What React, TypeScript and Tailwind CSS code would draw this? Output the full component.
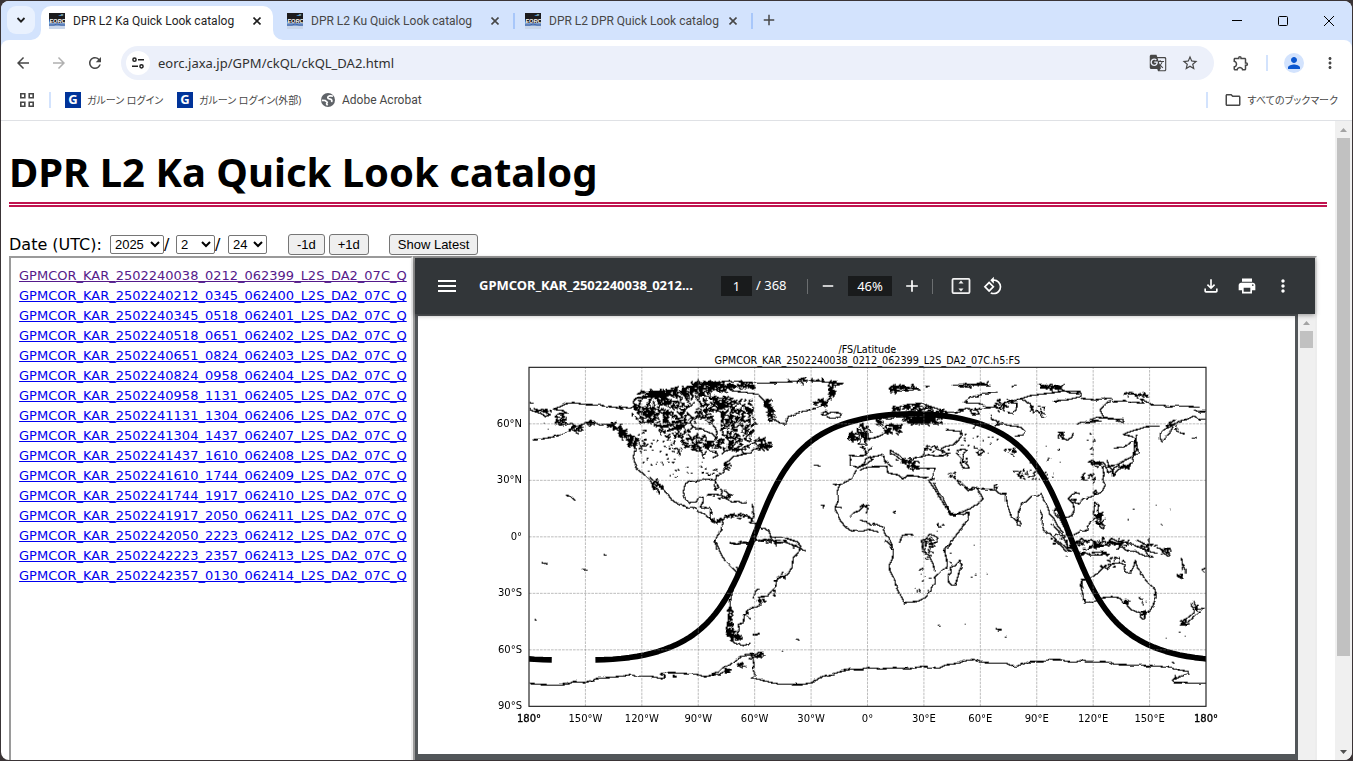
import type { ReactNode } from "react";
import {
  MdAdd,
  MdArrowBack,
  MdArrowForward,
  MdGTranslate,
  MdMenu,
  MdMoreVert,
  MdOutlineExtension,
  MdOutlineFileDownload,
  MdOutlineFolder,
  MdPerson,
  MdPrint,
  MdRefresh,
  MdRemove,
  MdRotate90DegreesCcw,
  MdStarBorder,
} from "react-icons/md";

const TABS = [
  "DPR L2 Ka Quick Look catalog",
  "DPR L2 Ku Quick Look catalog",
  "DPR L2 DPR Quick Look catalog",
];

const GRANULES = [
  "2502240038_0212_062399",
  "2502240212_0345_062400",
  "2502240345_0518_062401",
  "2502240518_0651_062402",
  "2502240651_0824_062403",
  "2502240824_0958_062404",
  "2502240958_1131_062405",
  "2502241131_1304_062406",
  "2502241304_1437_062407",
  "2502241437_1610_062408",
  "2502241610_1744_062409",
  "2502241744_1917_062410",
  "2502241917_2050_062411",
  "2502242050_2223_062412",
  "2502242223_2357_062413",
  "2502242357_0130_062414",
];

function Favicon() {
  return (
    <svg viewBox="0 0 16 16" className="size-4 shrink-0" aria-hidden="true">
      <rect width="16" height="16" fill="#1c1b1d" />
      <rect y="10" width="16" height="6" fill="#7f9fce" />
      <rect y="13" width="16" height="3" fill="#c9d6ea" />
      <path d="M0 12h5l3-1 4 1h4" stroke="#3f63a6" fill="none" />
      <path d="M9 3l4-2 2 1-3 1z" fill="#3c8ee8" />
      <path d="M12 2h2" stroke="#d9c84a" strokeWidth=".8" />
      <text
        x="0.3"
        y="9.8"
        fontSize="5.6"
        fontWeight="700"
        fontStyle="italic"
        fontFamily="Liberation Sans, sans-serif"
        fill="#fff"
      >
        EORC
      </text>
    </svg>
  );
}

function CloseIcon() {
  return (
    <svg viewBox="0 0 8 8" className="size-2" fill="none" stroke="currentColor" strokeWidth="1.6">
      <path d="M.5.5l7 7M7.5.5l-7 7" />
    </svg>
  );
}

function Tab({ title, active }: { title: string; active?: boolean }) {
  return (
    <div
      className={
        active
          ? "relative mr-1 flex h-[34px] w-[232px] items-center rounded-t-[10px] bg-white pb-1 pl-2 text-[#1f1f1f]"
          : "flex h-[34px] w-[238px] items-center pb-1 pl-[10px] text-[#474747]"
      }
    >
      {active && (
        <>
          <svg viewBox="0 0 10 10" className="absolute bottom-0 -left-[10px] size-[10px]" fill="#fff">
            <path d="M10 0v10H0A10 10 0 0 0 10 0z" />
          </svg>
          <svg viewBox="0 0 10 10" className="absolute -right-[10px] bottom-0 size-[10px]" fill="#fff">
            <path d="M0 0v10h10A10 10 0 0 1 0 0z" />
          </svg>
        </>
      )}
      <Favicon />
      <span className="ml-2 w-[176px] overflow-hidden text-[12px] whitespace-nowrap">{title}</span>
      <button type="button" aria-label={`Close ${title}`} className="flex size-4 items-center justify-center">
        <CloseIcon />
      </button>
      {!active && <span className="ml-[10px] h-4 w-[2px] bg-[#a8c7fa]" />}
    </div>
  );
}

function TabStrip() {
  return (
    <div className="flex h-[39px] shrink-0 items-end bg-[#d3e3fd] [font-family:Roboto,sans-serif]">
      <button
        type="button"
        aria-label="Search tabs"
        className="mr-[6px] mb-[6px] ml-[6px] flex size-7 items-center justify-center rounded-[9px] bg-[#e9f1fe]"
      >
        <svg viewBox="0 0 10 10" className="size-[10px]" fill="none" stroke="#1f1f1f" strokeWidth="1.8">
          <path d="M1.5 3l3.5 3.6L8.500 3" />
        </svg>
      </button>
      {TABS.map((title, index) => (
        <Tab key={title} title={title} active={index === 0} />
      ))}
      <button type="button" aria-label="New tab" className="mb-[11px] ml-[7px] text-[#474747]">
        <MdAdd className="size-[18px]" />
      </button>
      <div className="ml-auto flex h-full items-center text-black">
        <button type="button" aria-label="Minimize" className="flex w-[46px] justify-center">
          <svg viewBox="0 0 10 10" className="size-[10px]" stroke="currentColor">
            <path d="M0 4.500h10" />
          </svg>
        </button>
        <button type="button" aria-label="Maximize" className="flex w-[46px] justify-center">
          <svg viewBox="0 0 10 10" className="size-[10px]" fill="none" stroke="currentColor">
            <rect x=".5" y=".5" width="9" height="9" rx="1" />
          </svg>
        </button>
        <button type="button" aria-label="Close window" className="flex w-[46px] justify-center">
          <svg viewBox="0 0 10 10" className="size-[10px]" stroke="currentColor">
            <path d="M0 0l10 10M10 0L0 10" />
          </svg>
        </button>
      </div>
    </div>
  );
}

function Toolbar() {
  return (
    <div className="bg-[#d3e3fd]">
      <div className="flex h-[46px] items-center rounded-t-lg bg-white pl-[13px] text-[#474747]">
        <button type="button" aria-label="Back" className="mr-[18px]">
          <MdArrowBack className="size-[18px]" />
        </button>
        <button type="button" aria-label="Forward" className="mr-[18px] text-[#b0b0b0]">
          <MdArrowForward className="size-[18px]" />
        </button>
        <button type="button" aria-label="Reload">
          <MdRefresh className="size-[18px]" />
        </button>
        <div className="ml-[17px] flex h-[34px] grow items-center rounded-full bg-[#ecf0fa] px-[5px]">
          <button
            type="button"
            aria-label="Site information"
            className="flex size-6 items-center justify-center rounded-full bg-white"
          >
            <svg viewBox="0 0 14 14" className="size-[14px]" fill="none" stroke="#1f1f1f" strokeWidth="1.5">
              <circle cx="3.500" cy="3.700" r="1.600" />
              <path d="M7 3.700h6M1 10.300h6" />
              <circle cx="10.500" cy="10.300" r="1.600" />
            </svg>
          </button>
          <label className="ml-2 flex grow text-[13px]">
            <span className="hidden">Address</span>
            <input
              type="text"
              aria-label="Address"
              defaultValue="eorc.jaxa.jp/GPM/ckQL/ckQL_DA2.html"
              className="h-6 w-full grow bg-transparent text-[#303030] outline-none"
            />
          </label>
          <button type="button" aria-label="Translate this page" className="mr-[14px]">
            <MdGTranslate className="size-[18px]" />
          </button>
          <button type="button" aria-label="Bookmark this tab" className="mr-[10px]">
            <MdStarBorder className="size-[18px]" />
          </button>
        </div>
        <button type="button" aria-label="Extensions" className="ml-[18px]">
          <MdOutlineExtension className="size-[18px]" />
        </button>
        <span className="mx-4 h-4 w-[2px] bg-[#d3e3fd]" />
        <button
          type="button"
          aria-label="Profile"
          className="flex size-5 items-center justify-center rounded-full bg-[#d3e3fd] text-[#0b57d0]"
        >
          <MdPerson className="size-[18px]" />
        </button>
        <button type="button" aria-label="Menu" className="mr-[13px] ml-[17px]">
          <MdMoreVert className="size-[18px]" />
        </button>
      </div>
    </div>
  );
}

function Bookmark({ icon, className, children }: { icon: ReactNode; className?: string; children: ReactNode }) {
  return (
    <a href="#" className={`flex items-center gap-[6px] whitespace-nowrap ${className ?? ""}`}>
      {icon}
      {children}
    </a>
  );
}

function GaroonIcon() {
  return (
    <span className="flex size-4 items-center justify-center bg-[#003399] text-[13px] font-bold text-white">G</span>
  );
}

function GlobeIcon() {
  return (
    <svg viewBox="0 0 16 16" className="size-4" aria-hidden="true">
      <circle cx="8" cy="8" r="7" fill="#5f6368" />
      <path d="M13 4.200c-2-.8-4.800-.4-5.200 1-.3 1.300 1 1.600 2.400 1.900 1.600.4 2.200 1.700 1.200 3" fill="none" stroke="#fff" strokeWidth="1.7" />
      <path d="M1.800 8.300l3.400.2 2 1.700-.6 1.700 1 1.500" fill="none" stroke="#fff" strokeWidth="1.7" />
    </svg>
  );
}

function BookmarksBar() {
  return (
    <nav className="flex h-[35px] shrink-0 items-center border-b border-[#dfe1e5] bg-white pb-[6px] pl-[19px] text-[12px] text-[#474747]">
      <button type="button" aria-label="Apps">
        <svg viewBox="0 0 14 14" className="size-[14px]" fill="none" stroke="currentColor" strokeWidth="1.6">
          <path d="M.8.8h4v4h-4zM9.200.8h4v4h-4zM.8 9.200h4v4h-4zM9.200 9.200h4v4h-4z" />
        </svg>
      </button>
      <span className="mr-[14px] ml-[15px] h-4 w-[2px] bg-[#d3e3fd]" />
      <Bookmark className="w-28 text-[10px] [font-feature-settings:'palt']" icon={<GaroonIcon />}>
        ガルーン ログイン
      </Bookmark>
      <Bookmark className="w-[143px] text-[10px] [font-feature-settings:'palt']" icon={<GaroonIcon />}>
        ガルーン ログイン(外部)
      </Bookmark>
      <Bookmark className="[font-family:Roboto,sans-serif]" icon={<GlobeIcon />}>
        Adobe Acrobat
      </Bookmark>
      <span className="mr-4 ml-auto h-4 w-[2px] bg-[#d3e3fd]" />
      <Bookmark
        className="mr-[14px] text-[10px] [font-feature-settings:'palt']"
        icon={<MdOutlineFolder className="size-[18px]" />}
      >
        すべてのブックマーク
      </Bookmark>
    </nav>
  );
}

function Triangle({ down }: { down?: boolean }) {
  return (
    <svg viewBox="0 0 17 17" className="size-[17px]" fill={down ? "#505050" : "#a3a3a3"}>
      <path d={down ? "M5 7h7l-3.500 4z" : "M5 11h7l-3.500-4z"} />
    </svg>
  );
}

function DateForm() {
  const selectClass = "h-[19px] appearance-auto rounded-[2px] border border-[#767676] bg-white text-black";
  const buttonClass = "h-[21px] rounded-[3px] border border-[#767676] bg-[#efefef] px-2 text-black";

  return (
    <form className="flex items-center text-[13px] [font-family:'Liberation_Sans',Arial,sans-serif]">
      <span className="mr-2 text-[16px] leading-5 [font-family:'DejaVu_Sans',Verdana,sans-serif]">Date (UTC):</span>
      <select aria-label="Year" className={`${selectClass} w-[54px]`}>
        <option>2025</option>
      </select>
      <span className="w-[12px] text-[16px] leading-5 [font-family:'DejaVu_Sans',Verdana,sans-serif]">/</span>
      <select aria-label="Month" className={`${selectClass} w-[39px]`}>
        <option>2</option>
      </select>
      <span className="w-[13px] text-[16px] leading-5 [font-family:'DejaVu_Sans',Verdana,sans-serif]">/</span>
      <select aria-label="Day" className={`${selectClass} w-[39px]`}>
        <option>24</option>
      </select>
      <button type="button" className={`${buttonClass} ml-[21px]`}>
        -1d
      </button>
      <button type="button" className={`${buttonClass} ml-1`}>
        +1d
      </button>
      <button type="button" className={`${buttonClass} ml-5`}>
        Show Latest
      </button>
    </form>
  );
}

function GranuleList() {
  return (
    <div className="w-[404px] shrink-0 overflow-hidden border-2 border-t-[#9a9a9a] border-r-[#ededed] border-b-[#ededed] border-l-[#9a9a9a] bg-white">
      <ul className="px-2 pt-2 text-[13px] leading-5 whitespace-nowrap [font-family:'DejaVu_Sans',Verdana,sans-serif]">
        {GRANULES.map((id, index) => (
          <li key={id}>
            <a
              href="#"
              className={
                index === 0
                  ? "text-[#551a8b] underline [text-decoration-skip-ink:none]"
                  : "text-[#0000ee] underline [text-decoration-skip-ink:none]"
              }
            >
              GPMCOR_KAR_{id}_L2S_DA2_07C_Q
            </a>
          </li>
        ))}
      </ul>
    </div>
  );
}

// Figure units: three per CSS pixel at the default zoom.
const PLOT = { left: 333, top: 154, width: 2031, height: 1017 };
const toX = (lon: number) => PLOT.left + ((lon + 180) / 360) * PLOT.width;
const toY = (lat: number) => PLOT.top + ((90 - lat) / 180) * PLOT.height;

const LON_LABELS = ["180°", "150°W", "120°W", "90°W", "60°W", "30°W", "0°", "30°E", "60°E", "90°E", "120°E", "150°E", "180°"];
const LAT_LABELS = ["60°N", "30°N", "0°", "30°S", "60°S", "90°S"];

// One revolution: 65.3 degree inclination, the node drifts 23.2 degrees west per orbit.
// The track is drawn twice, a full turn apart, and the plot's clip keeps the visible part.
function orbitPath(turnOffset: number) {
  const rad = Math.PI / 180;
  const incl = 65.3 * rad;
  let d = "";
  for (let u = -90; u <= 270; u += 2) {
    const lat = Math.asin(Math.sin(incl) * Math.sin(u * rad)) / rad;
    let turn = Math.atan2(Math.cos(incl) * Math.sin(u * rad), Math.cos(u * rad)) / rad;
    if (u > 90 && turn < 0) turn += 360;
    const lon = -60.5 + turn - (u / 360) * 23.2 + turnOffset;
    d += `${d === "" ? "M" : "L"}${toX(lon).toFixed(1)} ${toY(lat).toFixed(1)}`;
  }
  return d;
}

// Lakes and small islands: [cx, cy, rx, ry, count, size]
type Cluster = [number, number, number, number, number, number];

function speckle(clusters: Cluster[]) {
  let seed = 7;
  const rnd = () => {
    seed = (seed * 16807) % 2147483647;
    return seed / 2147483647;
  };
  let d = "";
  for (const [cx, cy, rx, ry, count, size] of clusters) {
    for (let i = 0; i < count; i++) {
      const a = rnd() * Math.PI * 2;
      const r = Math.sqrt(rnd());
      const x = cx + Math.cos(a) * r * rx;
      const y = cy + Math.sin(a) * r * ry;
      const step = () => ((rnd() - 0.5) * size * 1.4).toFixed(0);
      d += `M${x.toFixed(0)} ${y.toFixed(0)}l${(rnd() * size * 0.7 + 2).toFixed(0)} ${step()}l${step()} ${step()}`;
    }
  }
  return d;
}

const NW_COAST = [
  "M28 128l14 2M28 148l17 7 15 5 20 10 10-6-15-8-20-5-15-6M70 188l3 2M83 208l2 1",
  "M102 148l13-6 25-11 20-3 30 5 50 3 45 6 25 6-12-8 35 5 12-8-6-12 15-12 20 4 14-12",
  "M102 148l28 4 10 8-30 2-2 8 22 2-12 8-10 5 22 5-2 8 22-8 20 10-20 10-30 15-30 8-30 5-22 2",
  "M170 200l30-12 20-3 20 10 25-3 15 8 20 15 20 20 25 20v15l-5 20 5 20 10 20 20 15 15 15 15 25 15 15",
  "M390 352l20 18 20 15 15 20 10 15 20 12 25 8 20 3 15 12 20 7 15 16 20 9 15-7 5 10-7 10 2 10-15 20-4 15 4 25",
  "M585 360l-25-2-25 4-25 3-15 10-5 20 5 20 15 13 20-3 5-13 15-2-2 20-8 10 30 5 5 15-3 15 18 12",
  "M585 360l-2 15 7 15 5-10-10-18 5-12 20-10 5-15-3-15 18-10 10-10 25-6 25-6 10-10 30-6 12 2 2 6-10-6-8-14-6-8-12 2-16 10-24 8-20 14",
  "M510 185l8 15 12 5 20 2 15 10 15 5 5 18 6-20-2-12-14-18 5-12-10-8-20 4-22-4z",
  "M635 92l45 6 35 5 20 22 10 25 10 25 20 13 22 4 8-22 25-10 35-10 25-5 25-10 5-15 20-20-5-20 35-10-50-4-60-6-60 6-80 4-30-2-60-6-40 6-50 10-40 6",
  "M905 160l12-6 8 8-12 4zM918 165l14-8 24 1 10 6-8 8-24 3-14-5",
  "M560 405l25-3 25 6 12 10 14 8 20-2 12 6 10-2M590 378l8 4M600 385l6 10M612 392l10 4 4 8 14 2",
  "M695 430l3 10 2 14 2 12-6 14M605 485l10-15 20-7 15 5 20-5 20 10 8 10-10 4 20 4 10 10 15 4 15 10 5 18 10 16 30-4 25 10 25 10 15 8",
  "M630 550l25 3 20-6 25 3 12-10 30 4 20-2M545 275l6 20M548 292l12-20M568 272l20 3 5 12-16 8M605 282l20-12 25-5M455 262l18 4 8 24",
  "M138 406l12 2 16 14M880 315l12 1 8 4M938 372l10 2 18-4M902 435l10 2-4 8M1050 435l-20 4-10 12-20 8-10 10",
  "M1010 330l-16 25-15 10-20 10-8 20 2 30-8 20 15 35 15 20 20 13 15-3 15 4 20-6 30 8M945 440l20 3",
  "M990 318l2-20-3-12 20 2 28-2-5-20-12-6M990 318l15 2 8 4 20-14 5-14 14-6M985 235l15-3 5-12 12 5-8 14-20 1zM1012 205l10 4 4 15 10 12 6 20-28-4 8-10-6-6z",
  "M340 120l20-8 50-2 40 8M350 102l30-6 70-4M340 130l30 14 50 4M530 112l20-6 40 8 30 2 30 14 25 10 20 14-14 6-20-8-24-2-8 12 22 14 10-4",
].join("");

const NE_COAST = [
  "M0 232l8-6 20 10 20-4 20-8 15-14-6-12 18-5 14 4 20-4M60 200l-8-16 14-12 20 6 20-6 30-2 40 2",
  "M95 155l14-12 30-8 20-3 30-2 12 6 30 10 30 10 30 2 20-6-16-2 26-5 10 4 4 12 22 1-4-10-14-2 30-6 30-2 30 2 4-14 18-3 20 4-2 16-10 14-18-4",
  "M412 98l-50 6-30 8-18 14 12 4 30 0 20 6M392 160l2 18 14 4 8 5-10 10 20-6 25 6 30 4 14 12-6 12-26 4M440 118l16 10 16-10 20 2 24 18 4 20 14-4 10 14 14 5M445 125l26-4 40-14 60-8 40-6 50 2 3 14-40 10-44 5 16-6M540 75l25 8 40 5 20 10 35 4",
  "M664 115l40 5 50-6 6 12 34-4 24 4 34 4-10-12 20 4 10 12 36 2 20 4 40-2 50 4M752 120l-14 10-18 20 10 20 20 6 40 2-4 10-14-9-60-7-20 6 30 6-60 2-10 8",
  "M1037 178l-20-2-16-8-20 10-22 5-16 10-20 4 20-18M940 195l-20 10-18 10-2 20 6 10 10-15 14-10 8-20M1000 150l20 5 16 0M900 198l-40 2-50 15-20 8 24 6 14 8 4 24-10 25-35 20-20 10-40 4",
  "M830 225l-4 20 6 20 4 15-16 6 4-26-2-25M816 286l4 22-24 12-24 10-14 20 0-22 16-8 20 2 22-14M760 265l36-6 20-14M740 300l8 20 10 12-14 6-6-20-10-12-20 2-24-2 14-6 10 8 20 14 4 22-4 14 8 16-10 20-16 10-22 8-20 4-12 16-14-6M706 390l4 6-6 8-4-6zM700 370l6-20",
  "M545 400l-12 8-18 0-12 12-16 14-10 16-4 22-6 14-12-12-6-20-8-18-6-22 2-14-16 2-14-10 4-12M545 402l8 24 10 14 6 22 14 16 10 20 16 20 4 14 8-10-6-18-16-26-16-18 2-14 12 8 14 16 10 4 14-8 8-16-4-20-14-14 8-10 14-8 12 3",
  "M470 485l8-2 6 8-4 6-8-2zM634 418l14 0-4 8-10 0zM402 378l10-6M405 380l-4 10-30-4-20 2-12-6-14 10-14-12-14-8-6-12 14 8 14 14 14 8 14-6 14 18 8 14-20 18-24 14-24 10-28 4-10-18-16-30-14-20-12-26",
  "M205 360l20 30 20 32 18 30 8 14 26-4 14 2 8-6 8 0-4 22-26 34-24 32-6 10-5 14M205 360l16-2-2-20 6-14-20 2-20-2-14 4-8-10-14-14 14-10 22-4 20-6 20 4 24-1 12-6-16-12-16-2-6-10-20 2-10 16-4 14M150 328l-10-14-20-16-14-12-14-6-2-10 14 8 20 12 10 14 16 4",
  "M0 288l16-4 8-12 14-10M0 262l14 2-2 18M0 330l14-6 26-4 40-1 4 20 30 6 18 12 10-10 20 0 30 6 15-1M0 320l14-4 16-12 10-4-12-8 24-4 18-5",
  "M70 286l6 24M84 312l12 8M78 302l4 8M0 440l12-4 12 10-6 14M0 480l20 6 14 10 14-4 20 10 6 18 20 28 4 20M186 570l4-18 6-14 14-16 10 0 14 12-8 14-18 6M118 545l10-20 20-2 14 2M160 305l14-2 4 8",
  "M290 272l20-5 12 4-14 12-2 18 18 16 4 8-20-2-6-14 2-14-10-10-6-8M354 272l12-4 6 8-8 8-10 0-2-8M305 225l-8 14-14 14-24 6-20 10M256 208l24 4 20 2 3 10M340 205l8-10M592 215l14 4 4 14 10 8 14-8 6-12",
  "M540 450l8 20-2 26 8 16 14 10 20 16 20 16 24 20M575 490l14 16 12 14 12 18 10 20M640 525l20-10 22-4 8-24 12-14M706 426l10 10-4 20 14 8-6 20 14 14-4 8-8-8-12-6 2-14-12-16zM652 545l14-10 16 14 12-10 8 8-6 14-20 10M700 545l20 14 20-6 14-18 20 10 26 2 20 8 26 10 24 10 24 6",
  "M86 84l24-6 30 2 36 4-20 6-30 4-40-6M276 76l40-3 60 2 16 0M350 70l30 2M455 80l16-2M196 80l14-1M536 72l30 6 40 10M792 104l30-2 44 6M960 218l14 4M996 234l14 2",
].join("");

const SW_COAST = [
  "M676 0l8 20 8 20 14 24 18 18 14 12 2 20-10 30-8 34-4 34-4 30-4 22 2 22 12 16 16 10 20 5 22-8",
  "M748 292l-6-12 6-14-4-12 16-6 2-16 12-12-4-8 14-8 22-5 6-14-6-14 26-2 12-16 12-12 6-26 20-6 14-8 10-20 4-28 18-20 4-14-12-14-24-8-20-6-20 2-16-4",
  "M720 8l22 5 14-7 24 4 10-6 20 0 16-6 16 6 30-4M676 4l4-4M340 42l8 5M156 68l14 5M276 86l16 6M134 239l6 1M788 284l18-1M918 296l12 5M876 334l4-1M738 80l8 10M790 176l8-26 12-4M852 122l10 0M868 108l12 4M874 96l8 2",
  "M118 430l40 4 52 2 30-6 10-5 34 3 36-12 46-4 40-5 14-3 20 5 40-1 34 8 10-1 0-8-14-4 10-4 30-1 50 4 24 2 20 6 10-1 26-6 10 2-20-4 18-8 10-10 22-8 16-14 14-10 22-6 26-2",
  "M686 404l20-12 14-6M742 380l16-14M776 356l20-6 26-14M788 352l4 20-2 20 6 10-12 12 20 3 20 6 20 5 32 5 60 1 30-6 14-8 14-10 26-6 20-6 40-10 40 2",
].join("");

const SE_COAST = [
  "M74 0l16 12 10 18-2 24-10 24 2 16 14 26 6 26 12 20 8 14 0 8 20-1 26-4 20-10 16-20 4-16 10-6-2-20 12-10 10-10 16-10-2-24-6-20 2-12 20-15",
  "M300 60l6 14-8 20-6 22-6 18-12 2-8-10-2-16 10-14-4-14 18-6zM266 66l10 6M270 38l4 4M184 0l4 20 8 18 10 8 14 30 4 20M176 92l14-8M192 40l20 6",
  "M668 118l-8 18 6 16 4 20 2 16 30-4 24-10 30-4 24 4 10 14 8-8 2 14 12 14 20 8 34 2 14-24 8-22-2-22-16-14-14-16-14-24-10-14-6-20-6 20-8 18-14-4-6-14 4-8-20-6-20 4-16 14-8-6-20 20-16 12-22 8z",
  "M838 214l20-2-2 20-6 6-8-6-4-10zM998 184l8 12 4 8 20 0-12 12-14 14-16 12-10 12-16 2 6-14 20-12 14-12 0-14-10-14M964 54l4 20 10 14 0 14M950 106l16 10 4-2-20-10M1036 84l-10 6 8 8M890 22l20 8 20 16-4 4-22-16M408 266l14 5",
  "M580 0l20 12 16 18 30 6 30 2 14 8 30 0 20-8-14-2-30 2M620 0l2 24 16-4 12-18M690 0l20 10-2 14 14-4M740 8l20-2 20 8M766 26l20-6 14 12 20-2 20 12 16 6 24 4-18-8-10-20 14-10 2-20M830 0l30 14 20-2",
  "M0 388l24-5 40 4 40-4 40 4 24-4 20-4 36 4 14 2 20-10 40-6 24-8 18-3 20 8 40 4 40 0 12 6 16 3 20-6 20-8 40 0 16-2 4-6 12 2 20 0 26 6 20 2 16-6 20 6 50-2 20 2 10 6L890 378l40 6 30 6 24 4 2 8-22 7-16 7-10 4 4 8 20 0 80 2",
  "M340 16l4 0M334 110l4 2M345 106l4 0M380 102l2 1M234 256l4 0M313 253l4 0M436 290l4 2M916 298l4 0M958 276l3 3M974 287l3 2M936 366l8 4M616 48l4 2",
].join("");

const NW_DOTS: Cluster[] = [
  [560, 82, 60, 16, 110, 14],
  [470, 96, 60, 10, 50, 14],
  [400, 102, 50, 6, 40, 14],
  [650, 78, 50, 8, 40, 12],
  [400, 140, 62, 34, 80, 12],
  [500, 130, 120, 36, 110, 14],
  [620, 140, 70, 26, 80, 13],
  [370, 165, 40, 24, 36, 12],
  [450, 180, 70, 26, 60, 12],
  [460, 205, 50, 28, 70, 11],
  [570, 175, 80, 10, 24, 12],
  [650, 205, 50, 44, 100, 11],
  [530, 250, 50, 22, 80, 11],
  [630, 255, 80, 18, 50, 11],
  [680, 160, 22, 24, 20, 12],
  [725, 250, 22, 18, 26, 12],
  [282, 198, 22, 12, 24, 10],
  [305, 220, 18, 12, 30, 10],
  [332, 244, 18, 14, 40, 10],
  [120, 180, 20, 14, 20, 10],
  [165, 208, 22, 8, 20, 9],
  [205, 188, 16, 5, 12, 8],
  [738, 130, 8, 16, 20, 10],
  [748, 160, 8, 26, 34, 10],
  [932, 90, 10, 26, 34, 10],
  [900, 128, 20, 12, 26, 10],
  [420, 275, 70, 50, 34, 4],
  [365, 240, 14, 40, 20, 7],
  [480, 330, 100, 34, 16, 3],
  [570, 340, 36, 14, 12, 5],
  [408, 378, 16, 20, 20, 8],
  [618, 320, 12, 12, 14, 7],
  [650, 470, 40, 8, 16, 7],
  [590, 483, 20, 6, 16, 6],
  [600, 408, 34, 8, 14, 7],
  [1030, 215, 18, 30, 24, 9],
  [995, 232, 14, 10, 16, 8],
  [760, 543, 40, 6, 14, 7],
  [850, 62, 60, 3, 14, 9],
  [60, 155, 30, 6, 12, 8],
];

const NE_DOTS: Cluster[] = [
  [110, 86, 28, 7, 30, 10],
  [150, 82, 26, 4, 12, 9],
  [340, 74, 50, 3, 14, 10],
  [570, 82, 36, 7, 22, 10],
  [824, 106, 38, 6, 20, 10],
  [150, 146, 60, 10, 44, 12],
  [175, 180, 50, 10, 110, 12],
  [230, 185, 14, 16, 14, 8],
  [95, 208, 30, 14, 44, 10],
  [55, 182, 8, 14, 16, 9],
  [12, 228, 16, 14, 20, 8],
  [232, 158, 36, 10, 22, 9],
  [420, 135, 22, 18, 24, 8],
  [530, 145, 30, 10, 10, 9],
  [210, 268, 24, 12, 12, 6],
  [158, 318, 20, 10, 24, 8],
  [126, 300, 20, 12, 8, 5],
  [330, 260, 90, 50, 30, 3],
  [455, 272, 22, 10, 12, 6],
  [500, 345, 60, 16, 34, 4],
  [560, 300, 60, 60, 18, 3],
  [690, 270, 14, 50, 10, 4],
  [680, 352, 22, 12, 16, 7],
  [706, 312, 16, 8, 16, 7],
  [790, 320, 26, 8, 12, 7],
  [715, 478, 12, 20, 28, 8],
  [602, 226, 10, 12, 10, 7],
  [275, 345, 14, 8, 10, 4],
  [205, 545, 20, 18, 20, 4],
  [585, 530, 20, 22, 12, 5],
  [745, 545, 40, 12, 20, 7],
  [670, 555, 26, 14, 12, 7],
  [935, 200, 18, 20, 12, 6],
  [235, 500, 10, 20, 6, 5],
  [105, 457, 8, 3, 5, 3],
  [870, 460, 80, 50, 5, 2],
];

const SW_DOTS: Cluster[] = [
  [717, 240, 7, 46, 44, 7],
  [718, 280, 12, 14, 40, 9],
  [738, 294, 22, 7, 30, 8],
  [825, 4, 36, 4, 12, 6],
  [816, 182, 14, 6, 12, 5],
  [848, 160, 6, 12, 8, 5],
  [800, 346, 24, 6, 18, 7],
  [710, 392, 10, 7, 16, 6],
  [750, 376, 10, 6, 10, 6],
  [550, 406, 10, 5, 6, 4],
  [766, 230, 12, 14, 10, 4],
  [912, 20, 8, 8, 4, 4],
  [795, 284, 10, 2, 6, 4],
  [870, 110, 14, 10, 8, 4],
];

const SE_DOTS: Cluster[] = [
  [640, 12, 26, 14, 14, 8],
  [700, 42, 50, 3, 20, 6],
  [712, 14, 16, 12, 20, 7],
  [775, 12, 34, 10, 16, 7],
  [860, 20, 24, 10, 12, 7],
  [915, 36, 20, 10, 12, 6],
  [770, 60, 34, 6, 10, 6],
  [740, 80, 30, 6, 10, 6],
  [798, 185, 8, 8, 14, 5],
  [848, 222, 8, 10, 12, 5],
  [838, 186, 26, 14, 7, 2],
  [200, 30, 20, 34, 26, 4],
  [190, 130, 30, 30, 9, 2],
  [970, 248, 12, 8, 14, 5],
  [1005, 210, 12, 14, 12, 6],
  [958, 108, 10, 6, 10, 5],
  [968, 80, 6, 18, 8, 4],
  [414, 268, 6, 3, 8, 3],
  [664, 130, 4, 16, 8, 4],
  [942, 414, 6, 6, 5, 4],
];

const REGIONS = [
  { shift: "translate(306 132)", coast: NW_COAST, dots: speckle(NW_DOTS) },
  { shift: "translate(1326 132)", coast: NE_COAST, dots: speckle(NE_DOTS) },
  { shift: "translate(216 672)", coast: SW_COAST, dots: speckle(SW_DOTS) },
  { shift: "translate(1326 672)", coast: SE_COAST, dots: speckle(SE_DOTS) },
];

function LatitudeFigure() {
  const right = PLOT.left + PLOT.width;
  const bottom = PLOT.top + PLOT.height;

  return (
    <svg
      viewBox="0 0 2631 1314"
      className="block h-auto w-full bg-white"
      role="img"
      aria-label="Ground track of the granule on a world map"
      fontFamily="DejaVu Sans, sans-serif"
      fontSize="30"
    >
      <defs>
        <clipPath id="plot">
          <rect x={PLOT.left} y={PLOT.top} width={PLOT.width} height={PLOT.height} />
        </clipPath>
        <filter id="rough" x="0" y="0" width="100%" height="100%" colorInterpolationFilters="sRGB">
          <feTurbulence type="fractalNoise" baseFrequency="0.045" numOctaves="1" seed="4" />
          <feDisplacementMap in="SourceGraphic" scale="9" xChannelSelector="R" yChannelSelector="G" />
        </filter>
      </defs>
      <text x="1348" y="110" textAnchor="middle" fontSize="29">
        /FS/Latitude
      </text>
      <text x="1348" y="143" textAnchor="middle" fontSize="29">
        GPMCOR_KAR_2502240038_0212_062399_L2S_DA2_07C.h5:FS
      </text>
      <g clipPath="url(#plot)" fill="none" stroke="#000" strokeLinejoin="round">
        <g filter="url(#rough)" strokeWidth="4" shapeRendering="crispEdges">
          {REGIONS.map(({ shift, coast, dots }) => (
            <g key={shift} transform={shift}>
              <path d={coast} />
              <path d={dots} />
            </g>
          ))}
        </g>
        <path d={orbitPath(0)} strokeWidth="17" />
        <path d={orbitPath(-360)} strokeWidth="17" />
      </g>
      <g stroke="#808080" strokeOpacity=".65" strokeWidth="2.4" strokeDasharray="8 3">
        {LON_LABELS.slice(1, -1).map((label, index) => (
          <path key={label} d={`M${toX(-150 + index * 30)} ${bottom}V${PLOT.top}`} />
        ))}
        {LAT_LABELS.slice(0, -1).map((label, index) => (
          <path key={label} d={`M${PLOT.left} ${toY(60 - index * 30)}H${right}`} />
        ))}
      </g>
      <rect
        x={PLOT.left}
        y={PLOT.top}
        width={PLOT.width}
        height={PLOT.height}
        fill="none"
        stroke="#222"
        strokeWidth="3.500"
      />
      {LON_LABELS.map((label, index) => (
        <text
          key={index}
          x={toX(-180 + index * 30)}
          y="1217"
          textAnchor="middle"
          stroke={label === "180°" ? "#000" : "none"}
        >
          {label}
        </text>
      ))}
      {LAT_LABELS.map((label, index) => (
        <text key={label} x="312" y={toY(60 - index * 30) + 8} textAnchor="end">
          {label}
        </text>
      ))}
    </svg>
  );
}

function PdfToolbar() {
  return (
    <div className="relative z-10 flex h-14 shrink-0 items-center bg-[#323639] pl-5 text-[13px] text-white shadow-[0_1px_5px_rgba(0,0,0,0.4)]">
      <button type="button" aria-label="Menu" className="mr-5">
        <MdMenu className="size-6" />
      </button>
      <span className="w-[242px] text-[13px] font-bold whitespace-nowrap">GPMCOR_KAR_2502240038_0212...</span>
      <input
        type="text"
        aria-label="Page number"
        defaultValue="1"
        className="h-5 w-[31px] bg-[#191b1c] text-center outline-none"
      />
      <span className="w-[55px] pl-1 whitespace-nowrap">/ 368</span>
      <span className="mr-2 h-[15px] w-px bg-[#6b6e70]" />
      <button type="button" aria-label="Zoom out" className="mx-[3px]">
        <MdRemove className="size-[18px]" />
      </button>
      <input
        type="text"
        aria-label="Zoom level"
        defaultValue="46%"
        className="mr-[10px] ml-2 h-5 w-11 bg-[#191b1c] text-center outline-none"
      />
      <button type="button" aria-label="Zoom in">
        <MdAdd className="size-5" />
      </button>
      <span className="mr-[18px] ml-[10px] h-[15px] w-px bg-[#6b6e70]" />
      <button type="button" aria-label="Fit to page" className="mr-3">
        <svg viewBox="0 0 20 18" className="h-[18px] w-5" fill="none" stroke="#f1f1f1" strokeWidth="1.8">
          <rect x="1.500" y="1.900" width="17" height="14.200" rx="1" />
          <path d="M10 3.500l2.500 3h-5zM10 14.500l2.500-3h-5z" fill="#f1f1f1" stroke="none" />
        </svg>
      </button>
      <button type="button" aria-label="Rotate counterclockwise">
        <MdRotate90DegreesCcw className="size-5" />
      </button>
      <div className="mr-[22px] ml-auto flex items-center gap-4">
        <button type="button" aria-label="Download">
          <MdOutlineFileDownload className="size-5" />
        </button>
        <button type="button" aria-label="Print">
          <MdPrint className="size-5" />
        </button>
        <button type="button" aria-label="More actions">
          <MdMoreVert className="size-5" />
        </button>
      </div>
    </div>
  );
}

function PdfViewer() {
  return (
    <div className="flex min-w-0 grow flex-col border-2 border-t-[#9a9a9a] border-r-[#ededed] border-b-[#ededed] border-l-[#9a9a9a] bg-[#525659]">
      <PdfToolbar />
      <div className="flex min-h-0 grow">
        <div className="min-w-0 grow overflow-hidden px-[3px] pt-[2px]">
          <LatitudeFigure />
        </div>
        <div className="w-[17px] shrink-0 bg-[#f0f0f0]">
          <Triangle />
          <div className="mx-[2px] h-[17px] bg-[#c1c1c1]" />
        </div>
      </div>
    </div>
  );
}

export default function App() {
  return (
    <div className="h-screen bg-[#3a3436] p-px [font-family:'Noto_Sans','Noto_Sans_CJK_JP',sans-serif]">
      <div className="flex h-full flex-col overflow-hidden rounded-lg bg-white">
        <TabStrip />
        <Toolbar />
        <BookmarksBar />
        <div className="flex min-h-0 grow">
          <main className="flex min-w-0 grow flex-col overflow-hidden px-2">
            <h1 className="mt-6 mb-[27px] h-[62px] shrink-0 border-b-[5px] border-double border-[#c0144f] text-[40px] leading-[54px] font-bold whitespace-nowrap text-black">
              DPR L2 Ka Quick Look catalog
            </h1>
            <DateForm />
            <div className="mr-[10px] flex min-h-[600px] shrink-0 pt-px">
              <GranuleList />
              <PdfViewer />
            </div>
          </main>
          <div className="flex w-[17px] shrink-0 flex-col bg-[#f0f0f0]">
            <Triangle />
            <div className="mx-[2px] h-[81%] bg-[#c1c1c1]" />
            <div className="mt-auto">
              <Triangle down />
            </div>
          </div>
        </div>
      </div>
    </div>
  );
}
